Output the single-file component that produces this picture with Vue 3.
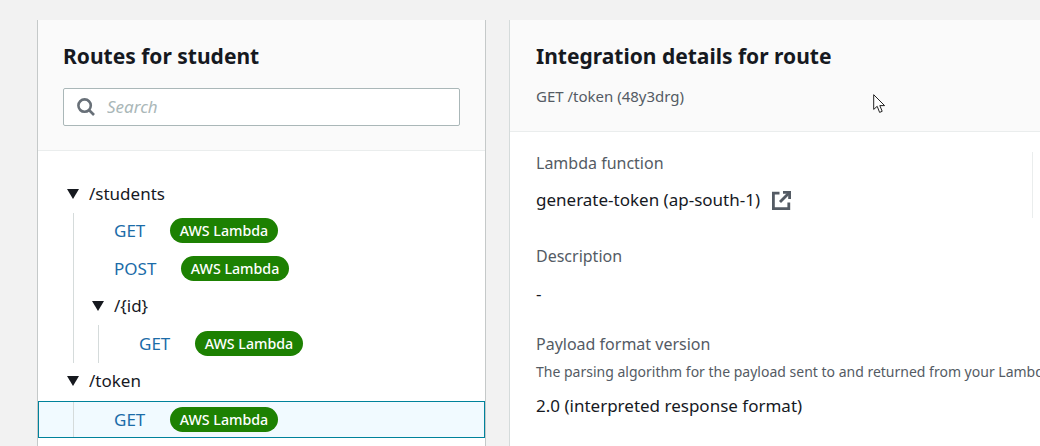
<template>
  <div class="page">
    <section class="panel routes">
      <header class="routes-head">
        <h2>Routes for student</h2>
        <div class="search">
          <svg class="search-icon" viewBox="0 0 18 18" width="18" height="18">
            <circle cx="7.6" cy="7.6" r="6.2" />
            <path d="M12 12 L17 17" />
          </svg>
          <input type="text" placeholder="Search" />
        </div>
      </header>
      <ul class="tree">
        <li
          v-for="row in rows"
          :key="row.id"
          class="row"
          :class="{ selected: row.selected }"
        >
          <span v-for="g in row.guides" :key="g" class="guide" :class="g"></span>
          <template v-if="row.path">
            <span class="caret"></span>
            <span class="path">{{ row.path }}</span>
          </template>
          <template v-else>
            <a class="method">{{ row.method }}</a>
            <span class="badge">AWS Lambda</span>
          </template>
        </li>
      </ul>
    </section>

    <section class="panel details">
      <header class="details-head">
        <h2>Integration details for route</h2>
        <p class="sub">GET /token (48y3drg)</p>
      </header>
      <div class="details-body">
        <div class="top-row">
          <div class="field">
            <div class="label">Lambda function</div>
            <div class="value link-value">
              generate-token (ap-south-1)
              <svg class="ext" viewBox="0 0 19 19" width="19" height="19">
                <path d="M7.5 2.2 H1.4 V17.6 H16.8 V11.5" />
                <path d="M11 1.4 H17.6 V8" />
                <path d="M17 2 L8 11" />
              </svg>
            </div>
          </div>
          <div class="col-rule"></div>
        </div>
        <div class="field">
          <div class="label">Description</div>
          <div class="value">-</div>
        </div>
        <div class="field">
          <div class="label">Payload format version</div>
          <div class="hint">The parsing algorithm for the payload sent to and returned from your Lambda function.</div>
          <div class="value">2.0 (interpreted response format)</div>
        </div>
      </div>
    </section>

    <svg class="pointer" viewBox="0 0 14 20" width="14" height="20">
      <path d="M0.7 0.7 V15.4 L4.2 12.3 L6.6 18.4 L9.2 17.3 L6.8 11.6 H11.6 Z" />
    </svg>
  </div>
</template>

<script setup>
const rows = [
  { id: 1, path: '/students', guides: [] },
  { id: 2, method: 'GET', guides: ['wide'] },
  { id: 3, method: 'POST', guides: ['wide'] },
  { id: 4, path: '/{id}', guides: ['short'] },
  { id: 5, method: 'GET', guides: ['step', 'wide'] },
  { id: 6, path: '/token', guides: [] },
  { id: 7, method: 'GET', guides: ['wide'], selected: true },
]
</script>

<style>
html,
body {
  margin: 0;
  background: #f2f2f2;
}
</style>

<style scoped>
.page {
  position: relative;
  display: flex;
  gap: 23px;
  width: 1040px;
  height: 446px;
  box-sizing: border-box;
  padding: 20px 0 0 37px;
  overflow: hidden;
  font-family: "Noto Sans", "Open Sans", sans-serif;
  color: #16191f;
  background: #f2f2f2;
}
.panel {
  background: #fff;
  box-sizing: border-box;
  flex: none;
}
.routes {
  width: 449px;
  border-left: 1px solid #c5c9c9;
  border-right: 1px solid #c5c9c9;
}
.details {
  width: 531px;
  border-left: 1px solid #d5dbdb;
}
h2 {
  margin: 0;
  font-size: 21px;
  line-height: 30px;
  font-weight: 700;
}
.routes-head {
  height: 131px;
  box-sizing: border-box;
  padding: 21px 25px 0 25px;
  background: #fafafa;
  border-bottom: 1px solid #eaeded;
}
.search {
  display: flex;
  align-items: center;
  height: 38px;
  box-sizing: border-box;
  margin-top: 17px;
  padding-left: 13px;
  background: #fff;
  border: 1px solid #aab7b8;
  border-radius: 2px;
}
.search-icon {
  flex: none;
  fill: none;
  stroke: #687078;
  stroke-width: 2.6;
}
.search input {
  flex: 1;
  min-width: 0;
  margin-left: 12px;
  padding: 0 0 2px;
  border: 0;
  outline: 0;
  background: transparent;
  font-family: inherit;
  font-size: 17px;
  font-style: italic;
}
.search input::placeholder {
  color: #aab7b8;
  opacity: 1;
}
.tree {
  list-style: none;
  margin: 0;
  padding: 24px 0 0;
}
.row {
  display: flex;
  align-items: center;
  height: 37.5px;
  box-sizing: border-box;
  padding-left: 29px;
  font-size: 17px;
}
.row:has(.guide) {
  padding-left: 35px;
}
.path,
.method {
  margin-bottom: 1px;
}
.guide {
  flex: none;
  align-self: stretch;
  box-sizing: border-box;
  border-left: 1px solid #d5dbdb;
}
.guide.wide {
  width: 41px;
}
.guide.short {
  width: 19px;
}
.guide.step {
  width: 25px;
}
.caret {
  flex: none;
  width: 0;
  height: 0;
  margin-right: 10px;
  border-left: 6px solid transparent;
  border-right: 6px solid transparent;
  border-top: 10px solid #16191f;
}
.method {
  color: #1b6ca8;
}
.badge {
  margin-left: 24.5px;
  margin-bottom: 1px;
  padding: 0 10px;
  height: 25px;
  line-height: 25px;
  font-size: 14.2px;
  font-weight: 500;
  color: #fff;
  background: #1d8102;
  border-radius: 13px;
}
.selected {
  height: 37px;
  margin-top: 1px;
  background: #f1faff;
  border-top: 1px solid #00829b;
  border-bottom: 1px solid #00829b;
  box-shadow: inset 1px 0 0 #00829b, inset -1px 0 0 #00829b;
}
.details-head {
  height: 112px;
  box-sizing: border-box;
  padding: 21px 26px 0;
  background: #fafafa;
  border-bottom: 1px solid #eaeded;
}
.sub {
  margin: 15px 0 0;
  font-size: 15px;
  line-height: 20px;
  color: #545b64;
}
.details-body {
  padding: 20px 0 0 26px;
}
.top-row {
  display: flex;
  height: 66px;
}
.top-row .field {
  width: 496px;
}
.col-rule {
  width: 1px;
  height: 66px;
  background: #eaeded;
}
.field + .field,
.top-row + .field {
  margin-top: 27px;
}
.label {
  font-size: 16px;
  line-height: 22px;
  color: #545b64;
}
.value {
  margin-top: 15px;
  font-size: 17px;
  line-height: 24px;
  white-space: nowrap;
}
.link-value {
  display: flex;
  align-items: center;
  gap: 12px;
  margin-top: 14px;
}
.hint {
  margin-top: 7px;
  font-size: 14px;
  line-height: 20px;
  color: #545b64;
  white-space: nowrap;
}
.hint + .value {
  margin-top: 12px;
}
.ext {
  fill: none;
  stroke: #545b64;
  stroke-width: 2.8;
}
.pointer {
  position: absolute;
  left: 873px;
  top: 94px;
  fill: #fff;
  stroke: #222;
  stroke-width: 1;
}
</style>
